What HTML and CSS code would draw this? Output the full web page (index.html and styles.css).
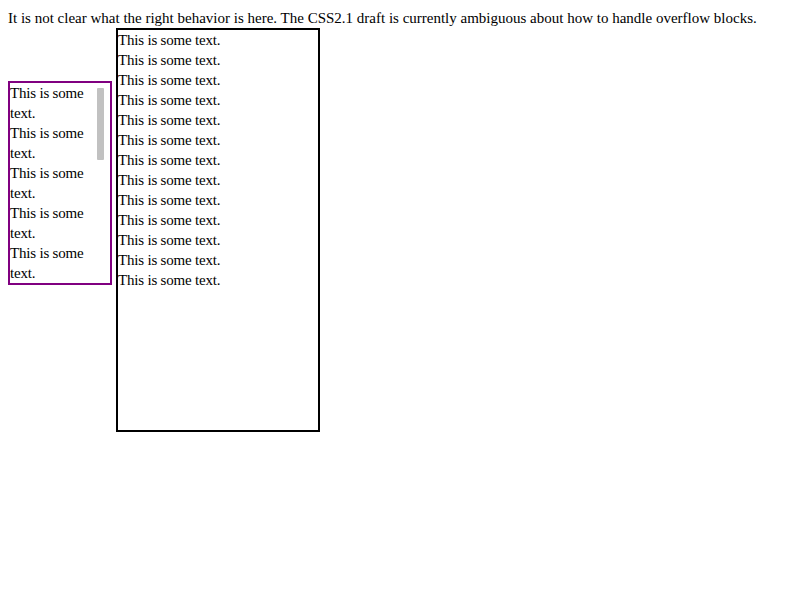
FILE: index.html
```html
<!DOCTYPE html>
<html>
<head>
<meta charset="utf-8">
<link rel="stylesheet" href="styles.css">
</head>
<body>
<p class="intro">It is not clear what the right behavior is here. The CSS2.1 draft is currently ambiguous about how to handle overflow blocks.</p>
<div class="row">
  <div class="scrollbox">
    <div class="content">
      <div>This is some text.</div><div>This is some text.</div><div>This is some text.</div><div>This is some text.</div><div>This is some text.</div><div>This is some text.</div><div>This is some text.</div><div>This is some text.</div><div>This is some text.</div><div>This is some text.</div><div>This is some text.</div><div>This is some text.</div><div>This is some text.</div>
    </div>
    <div class="thumb"></div>
  </div>
  <div class="bigbox">
    <div>This is some text.</div><div>This is some text.</div><div>This is some text.</div><div>This is some text.</div><div>This is some text.</div><div>This is some text.</div><div>This is some text.</div><div>This is some text.</div><div>This is some text.</div><div>This is some text.</div><div>This is some text.</div><div>This is some text.</div><div>This is some text.</div>
  </div>
</div>
</body>
</html>
```
FILE: styles.css
```css
body {
  margin: 8px;
  font-family: "Liberation Serif", "Times New Roman", serif;
  font-size: 15px;
  letter-spacing: -0.2px;
  line-height: 20px;
  color: #000;
  background: #fff;
}
.intro {
  margin: 0;
  white-space: nowrap;
  letter-spacing: 0;
}
.row {
  display: flex;
  align-items: flex-start;
  gap: 4px;
}
.scrollbox {
  position: relative;
  margin-top: 53px;
  width: 100px;
  height: 200px;
  border: 2px solid #800080;
  overflow: hidden;
}
.thumb {
  position: absolute;
  top: 5px;
  left: 87px;
  width: 7px;
  height: 72px;
  background: #c1c1c1;
  border-radius: 1px;
}
.bigbox {
  width: 200px;
  height: 400px;
  border: 2px solid #000;
}
```
